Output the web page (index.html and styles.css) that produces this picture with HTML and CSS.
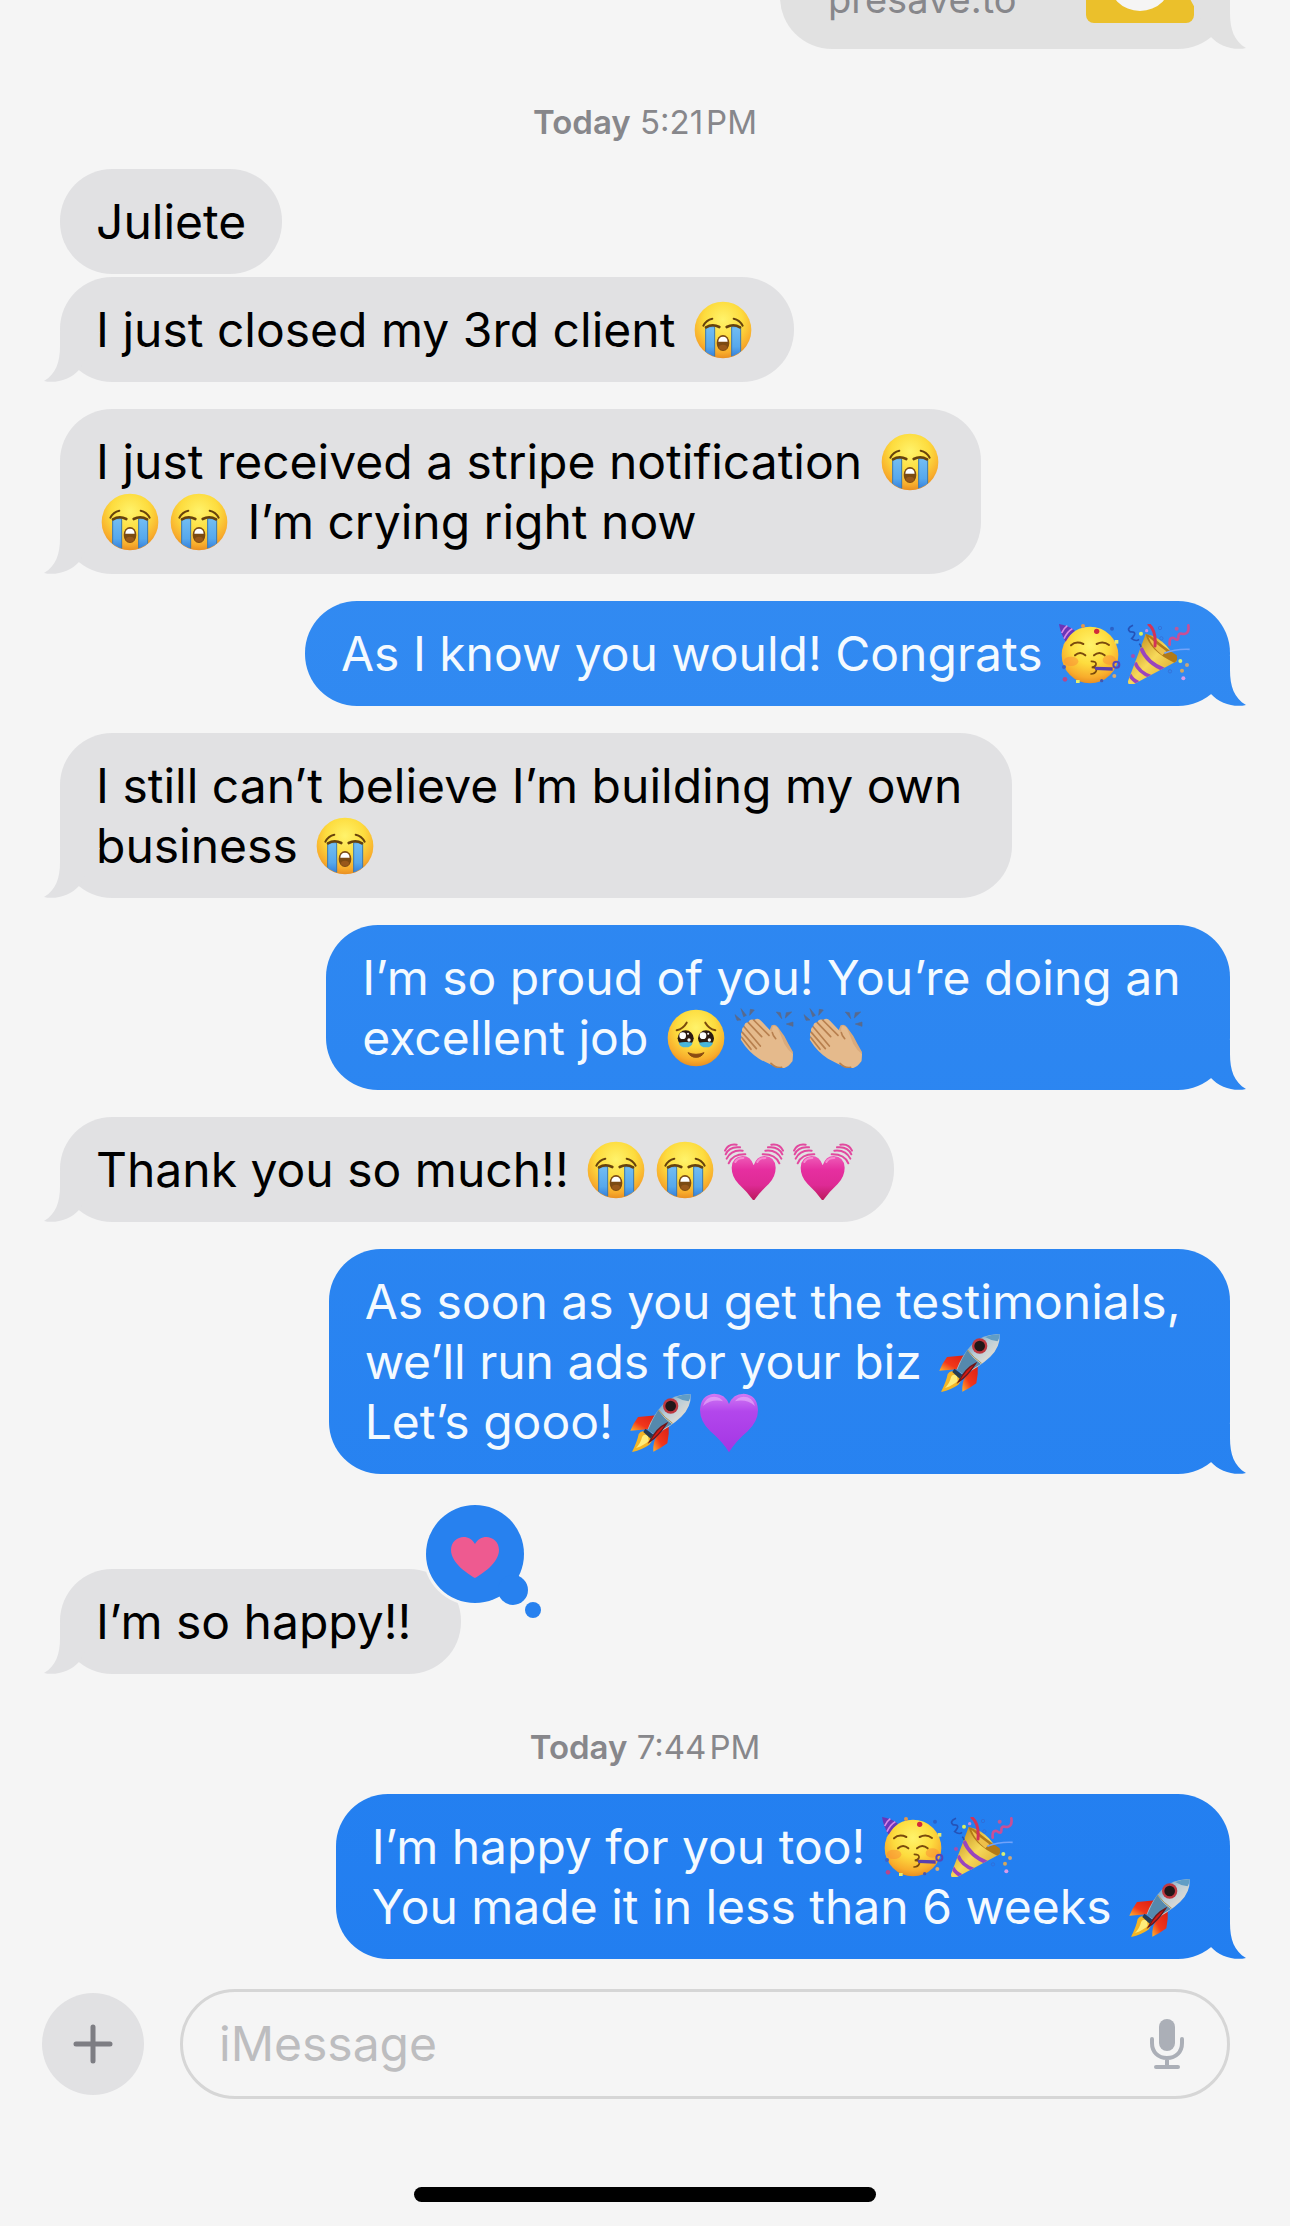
FILE: index.html
```html
<!DOCTYPE html>
<html lang="en">
<head>
    <meta charset="UTF-8">
    <meta name="viewport" content="width=device-width, initial-scale=1.0">
    <title>Messages</title>
    <link rel="stylesheet" href="styles.css">
</head>
<body>

    <!-- Emoji and icon shapes -->
    <svg class="sprite" width="0" height="0" aria-hidden="true">
        <defs>
            <radialGradient id="skin" cx="50%" cy="32%" r="68%">
                <stop offset="0" stop-color="#fff36b"/>
                <stop offset="0.5" stop-color="#fddc3e"/>
                <stop offset="0.85" stop-color="#f8ac2c"/>
                <stop offset="1" stop-color="#e98f22"/>
            </radialGradient>
            <linearGradient id="tear" x1="0" y1="0" x2="0" y2="1">
                <stop offset="0" stop-color="#72bdf3"/>
                <stop offset="0.6" stop-color="#56a8ec"/>
                <stop offset="1" stop-color="#2a72d4"/>
            </linearGradient>
            <linearGradient id="pink" x1="0" y1="0" x2="0" y2="1">
                <stop offset="0" stop-color="#ee5cb8"/>
                <stop offset="0.3" stop-color="#e62fa0"/>
                <stop offset="0.65" stop-color="#de2a95"/>
                <stop offset="1" stop-color="#b91a58"/>
            </linearGradient>
            <linearGradient id="purple" x1="0" y1="0" x2="0" y2="1">
                <stop offset="0" stop-color="#d27af4"/>
                <stop offset="0.3" stop-color="#b347ec"/>
                <stop offset="1" stop-color="#a336e4"/>
            </linearGradient>
            <linearGradient id="hull" x1="0" y1="0" x2="1" y2="1">
                <stop offset="0.1" stop-color="#3f7fae"/>
                <stop offset="0.45" stop-color="#b9cdd8"/>
                <stop offset="0.65" stop-color="#d8d8d4"/>
                <stop offset="1" stop-color="#6d6f74"/>
            </linearGradient>
            <linearGradient id="fin" x1="1" y1="0" x2="0" y2="1">
                <stop offset="0" stop-color="#d91f14"/>
                <stop offset="0.6" stop-color="#f2371b"/>
                <stop offset="1" stop-color="#ffb52c"/>
            </linearGradient>
            <linearGradient id="gold" x1="0" y1="0" x2="1" y2="1">
                <stop offset="0.1" stop-color="#c08b1c"/>
                <stop offset="0.5" stop-color="#f7d95a"/>
                <stop offset="1" stop-color="#d39a22"/>
            </linearGradient>
            <clipPath id="face-clip"><circle cx="102" cy="90" r="84"/></clipPath>
            <clipPath id="cone-clip"><path d="M9 172 Q8 184 22 183 L155 112 Q120 40 62 30 Z"/></clipPath>
        </defs>

        <symbol id="sob" viewBox="0 0 207 180">
            <circle cx="102" cy="90" r="85" fill="url(#skin)"/>
            <g clip-path="url(#face-clip)">
                <path d="M50 80 H77 V180 H50 Z M128 80 H155 V180 H128 Z" fill="url(#tear)" stroke="#3978b0" stroke-width="3"/>
            </g>
            <g fill="none" stroke="#67420c" stroke-linecap="round">
                <path d="M43 77 Q52 60 70 56 M161 77 Q152 60 134 56" stroke-width="6"/>
                <path d="M51 82 Q70 70 91 81 M153 82 Q134 70 113 81" stroke-width="8"/>
            </g>
            <ellipse cx="102" cy="129" rx="19" ry="24" fill="#7b4a12"/>
            <path d="M88 125 Q89 110 102 110 Q115 110 116 125 Z" fill="#fff"/>
            <ellipse cx="102" cy="142" rx="12" ry="8" fill="#98581a"/>
        </symbol>

        <symbol id="party-face" viewBox="0 0 207 180">
            <circle cx="102" cy="93" r="85" fill="url(#skin)"/>
            <ellipse cx="45" cy="112" rx="22" ry="14" fill="#f98b35" opacity="0.5"/>
            <ellipse cx="160" cy="108" rx="20" ry="14" fill="#f98b35" opacity="0.5"/>
            <path d="M9 0 Q36 4 57 20 Q42 30 29 53 Q14 30 9 0 Z" fill="#6a35b8"/>
            <path d="M17 27 Q24 12 34 5 M24 44 Q34 22 49 14" fill="none" stroke="#d889e6" stroke-width="5"/>
            <g fill="none" stroke="#7a4a0c" stroke-width="6" stroke-linecap="round">
                <path d="M45 64 Q60 50 82 60 M122 60 Q142 50 159 63"/>
                <path d="M57 94 Q72 80 88 94 M114 94 Q130 80 146 94"/>
                <path d="M106 112 Q122 112 120 122 Q117 130 107 130 Q123 130 121 140 Q117 150 105 150" stroke-width="5"/>
            </g>
            <path d="M116 128 L170 130 L170 140 L118 138 Z" fill="#5a40ad"/>
            <circle cx="181" cy="122" r="9" fill="none" stroke="#5846b8" stroke-width="6"/>
            <circle cx="122" cy="22" r="8" fill="#d2293b"/>
            <circle cx="81" cy="6" r="6" fill="#e3974b"/>
            <circle cx="168" cy="14" r="6" fill="#2b62c8"/>
            <rect x="176" y="48" width="11" height="11" fill="#e9e86a"/>
            <circle cx="24" cy="129" r="6" fill="#3e62c8"/>
            <circle cx="27" cy="166" r="7" fill="#b5478c"/>
            <rect x="60" y="168" width="11" height="9" fill="#e6ed6c"/>
            <circle cx="175" cy="156" r="6" fill="#d8aa72"/>
            <circle cx="137" cy="170" r="5" fill="#4555ae"/>
        </symbol>

        <symbol id="popper" viewBox="0 0 207 180">
            <path d="M9 172 Q8 184 22 183 L155 112 Q120 40 62 30 Z" fill="url(#gold)"/>
            <g clip-path="url(#cone-clip)" fill="none" stroke="#9a45bd" stroke-width="11">
                <path d="M48 72 Q66 118 120 138 M30 116 Q42 146 78 158 M14 152 Q22 168 40 176"/>
            </g>
            <path d="M62 30 Q78 34 98 52 Q130 78 155 94 Q160 112 148 116 Q112 100 88 76 Q66 52 62 30 Z" fill="#b27a18"/>
            <path d="M70 38 Q96 62 124 82 L112 94 Q82 70 70 38 Z" fill="#eec04a"/>
            <path d="M90 66 Q94 20 72 2" fill="none" stroke="#d23358" stroke-width="9" stroke-linecap="round"/>
            <path d="M134 62 Q132 38 146 42 Q162 54 160 36 Q162 26 174 30 Q194 30 190 4" fill="none" stroke="#c94f96" stroke-width="8" stroke-linecap="round"/>
            <path d="M24 4 Q2 14 16 24 Q40 22 20 44 Q34 54 42 46 M42 60 Q48 62 48 70" fill="none" stroke="#2553b8" stroke-width="5"/>
            <path d="M118 88 Q152 74 194 76" fill="none" stroke="#72a3fa" stroke-width="5"/>
            <circle cx="48" cy="29" r="6" fill="#d9ef5d"/>
            <circle cx="65" cy="20" r="5" fill="#c78ce0"/>
            <circle cx="105" cy="12" r="5" fill="none" stroke="#3568d0" stroke-width="2"/>
            <circle cx="109" cy="43" r="5" fill="none" stroke="#3568d0" stroke-width="2"/>
            <circle cx="155" cy="14" r="6" fill="#b95b9d"/>
            <circle cx="24" cy="96" r="6" fill="#a44fae"/>
            <circle cx="166" cy="111" r="6" fill="#d7ef76"/>
            <circle cx="186" cy="123" r="6" fill="#c9a77b"/>
            <circle cx="171" cy="140" r="6" fill="#d4a75b"/>
            <circle cx="135" cy="142" r="5" fill="none" stroke="#3568d0" stroke-width="2"/>
            <circle cx="175" cy="163" r="6" fill="#d99be8"/>
        </symbol>

        <symbol id="pleading" viewBox="0 0 207 180">
            <circle cx="102" cy="90" r="85" fill="url(#skin)"/>
            <g fill="none" stroke="#7a4a0c" stroke-width="6" stroke-linecap="round">
                <path d="M44 67 Q64 62 74 44 M160 67 Q140 62 130 44"/>
            </g>
            <circle cx="71" cy="91" r="24" fill="#2b1a12"/>
            <circle cx="132" cy="91" r="24" fill="#2b1a12"/>
            <path d="M50 104 Q71 100 92 104 Q88 118 71 118 Q54 118 50 104 Z M111 104 Q132 100 153 104 Q149 118 132 118 Q115 118 111 104 Z" fill="#49b6da"/>
            <g fill="#fff">
                <circle cx="62" cy="83" r="10"/><circle cx="123" cy="83" r="10"/>
                <circle cx="81" cy="96" r="5"/><circle cx="142" cy="96" r="5"/>
                <circle cx="78" cy="77" r="3"/><circle cx="139" cy="77" r="3"/>
            </g>
            <path d="M78 134 Q102 144 126 134 Q118 148 102 148 Q86 148 78 134 Z" fill="#8a4b12" stroke="#8a4b12" stroke-width="3" stroke-linejoin="round"/>
        </symbol>

        <symbol id="clap" viewBox="0 0 207 180">
            <path d="M12 20 L30 36 L18 37 Z M30 2 L46 22 L38 26 Z M58 4 L70 6 L56 22 Z M136 12 L148 14 L152 32 Z M166 14 L182 12 L163 30 Z M166 48 L186 42 V55 Z" fill="#596a8c" stroke="#596a8c" stroke-width="2" stroke-linejoin="round"/>
            <path d="M112 76 L122 52 Q134 46 141 58 L160 84 Q172 108 186 132 L184 160 Q158 188 124 172 Z" fill="#d9aa7c"/>
            <path d="M30 96 Q28 90 33 88 Q26 76 34 72 Q30 58 40 56 Q40 42 52 44 Q56 30 70 36 Q80 28 90 38 L124 74 Q122 56 128 54 Q138 54 142 64 L160 108 Q170 126 186 138 L184 160 Q166 186 144 180 Q112 168 84 152 Q52 132 30 96 Z" fill="#e5ba8c"/>
            <path d="M52 44 L92 86 M68 36 L114 82 M40 57 L88 114 M34 73 L76 122 M124 74 Q126 84 134 92 M33 89 L60 124 M120 166 Q136 182 152 178" fill="none" stroke="#b8804f" stroke-width="5" stroke-linecap="round"/>
        </symbol>

        <symbol id="beating" viewBox="0 0 207 180">
            <path d="M101 183 Q84 158 56 132 Q35 110 35 83 Q36 50 68 48 Q92 48 101 76 Q110 48 134 48 Q166 50 167 83 Q167 110 146 132 Q118 158 101 183 Z" fill="url(#pink)"/>
            <path d="M46 66 Q52 54 70 54 M112 66 Q118 54 136 54" fill="none" stroke="#f68bd0" stroke-width="6" stroke-linecap="round"/>
            <g fill="none" stroke="#e2499f" stroke-width="6" stroke-linecap="round">
                <path d="M26 70 Q38 42 76 43 M20 56 Q34 28 68 32 M17 43 Q28 18 60 22 M15 32 Q24 10 50 14"/>
                <path d="M178 70 Q166 42 128 43 M184 56 Q170 28 136 32 M187 43 Q176 18 144 22 M189 32 Q180 10 154 14"/>
            </g>
        </symbol>

        <symbol id="rocket" viewBox="0 0 207 180">
            <path d="M92 70 L36 75 Q22 94 13 116 L66 112 Z" fill="url(#fin)"/>
            <path d="M74 128 Q48 108 38 126 Q34 148 18 180 Q50 172 70 158 Q84 144 74 128 Z" fill="#f4b526"/>
            <path d="M66 130 Q50 124 48 136 Q44 154 30 168 Q58 158 68 146 Z" fill="#ffec7a"/>
            <path d="M128 98 L92 134 Q80 150 82 179 Q106 168 124 154 Q130 124 128 98 Z" fill="url(#fin)"/>
            <path d="M194 7 Q146 4 110 38 Q80 70 65 112 L84 128 Q130 108 166 74 Q196 46 194 7 Z" fill="url(#hull)"/>
            <path d="M97 54 Q80 80 66 114 L84 127 Q112 112 138 96 Q112 78 97 54 Z" fill="#5589ad"/>
            <path d="M98 54 Q116 78 140 94" fill="none" stroke="#ad9659" stroke-width="3"/>
            <path d="M150 15 Q168 26 188 28 Q194 18 194 7 Q172 6 150 15 Z" fill="#619dc5"/>
            <circle cx="134" cy="42" r="23" fill="#bd3840"/>
            <circle cx="134" cy="42" r="16" fill="#211718"/>
            <path d="M122 94 Q92 108 70 150 Q98 132 122 94 Z" fill="#d41a14" stroke="#6c171a" stroke-width="4"/>
            <path d="M58 110 L82 128 L74 140 L52 120 Z" fill="#263c53"/>
        </symbol>

        <symbol id="purple-heart" viewBox="0 0 207 180">
            <path d="M102 181 Q82 148 46 118 Q15 88 15 54 Q17 8 58 5 Q90 5 102 36 Q114 5 146 5 Q187 8 189 54 Q189 88 158 118 Q122 148 102 181 Z" fill="url(#purple)"/>
            <path d="M24 42 Q32 14 58 14 Q78 16 84 28 Q50 20 24 42 Z M120 28 Q126 16 146 14 Q172 14 180 42 Q154 20 120 28 Z" fill="#e6aafa" opacity="0.7"/>
        </symbol>
    </svg>

    <main class="chat">
        <div class="message sent link-card">
            <a href="#">presave.to</a>
            <svg class="link-thumb" viewBox="0 0 108 108" aria-hidden="true">
                <rect width="108" height="108" rx="8" fill="#ebc02b"/>
                <circle cx="54" cy="64" r="32" fill="#f5f5f5"/>
                <circle cx="54" cy="72" r="12" fill="#dedede"/>
            </svg>
        </div>

        <p class="timestamp"><b>Today</b> 5:21&#8202;PM</p>

        <div class="message received no-tail">Juliete</div>
        <div class="message received">I just closed my 3rd client <svg class="emoji" role="img" aria-label="crying"><use href="#sob"/></svg></div>
        <div class="message received">I just received a stripe notification <svg class="emoji" role="img" aria-label="crying"><use href="#sob"/></svg><br><svg class="emoji" role="img" aria-label="crying"><use href="#sob"/></svg><svg class="emoji" role="img" aria-label="crying"><use href="#sob"/></svg> I’m crying right now</div>
        <div class="message sent">As I know you would! Congrats <svg class="emoji" role="img" aria-label="party face"><use href="#party-face"/></svg><svg class="emoji" role="img" aria-label="party popper"><use href="#popper"/></svg></div>
        <div class="message received">I still can’t believe I’m building my own&nbsp;<br>business <svg class="emoji" role="img" aria-label="crying"><use href="#sob"/></svg></div>
        <div class="message sent">I’m so proud of you! You’re doing an&nbsp;<br>excellent job <svg class="emoji" role="img" aria-label="holding back tears"><use href="#pleading"/></svg><svg class="emoji" role="img" aria-label="clap"><use href="#clap"/></svg><svg class="emoji" role="img" aria-label="clap"><use href="#clap"/></svg></div>
        <div class="message received">Thank you so much!! <svg class="emoji" role="img" aria-label="crying"><use href="#sob"/></svg><svg class="emoji" role="img" aria-label="crying"><use href="#sob"/></svg><svg class="emoji" role="img" aria-label="beating heart"><use href="#beating"/></svg><svg class="emoji" role="img" aria-label="beating heart"><use href="#beating"/></svg></div>
        <div class="message sent">As soon as you get the testimonials,&nbsp;<br>we’ll run ads for your biz <svg class="emoji" role="img" aria-label="rocket"><use href="#rocket"/></svg><br>Let’s gooo! <svg class="emoji" role="img" aria-label="rocket"><use href="#rocket"/></svg><svg class="emoji" role="img" aria-label="purple heart"><use href="#purple-heart"/></svg></div>
        <div class="message received has-reaction">I’m so happy!!&nbsp;
            <svg class="reaction" viewBox="0 0 120 120" role="img" aria-label="loved">
                <circle cx="52" cy="52" r="52" fill="#f5f5f5"/>
                <g fill="#2781ef">
                    <circle cx="52" cy="52" r="49"/>
                    <circle cx="90" cy="88" r="15"/>
                    <circle cx="110" cy="108" r="8"/>
                </g>
                <path d="M52 76 C45 72 28 61 28 48 C28 34 46 30 52 42 C58 30 76 34 76 48 C76 61 59 72 52 76 Z" fill="#ee5a90"/>
            </svg>
        </div>

        <p class="timestamp"><b>Today</b> 7:44&#8202;PM</p>

        <div class="message sent">I’m happy for you too! <svg class="emoji" role="img" aria-label="party face"><use href="#party-face"/></svg><svg class="emoji" role="img" aria-label="party popper"><use href="#popper"/></svg><br>You made it in less than 6 weeks <svg class="emoji" role="img" aria-label="rocket"><use href="#rocket"/></svg></div>
    </main>

    <form class="composer">
        <button type="button" class="add-btn" aria-label="Add">
            <svg width="40" height="40" viewBox="0 0 40 40" fill="none" stroke="#7d7d83" stroke-width="5" stroke-linecap="round">
                <path d="M20 3 V37 M3 20 H37"/>
            </svg>
        </button>
        <div class="field">
            <input type="text" placeholder="iMessage" aria-label="iMessage">
            <button type="button" class="mic-btn" aria-label="Dictate">
                <svg width="36" height="50" viewBox="0 0 36 50" fill="none" stroke="#abafb7" stroke-width="4" stroke-linecap="round">
                    <rect x="10" y="0" width="16" height="32" rx="8" fill="#abafb7" stroke="none"/>
                    <path d="M3 20 V24 C3 33 9 39 18 39 C27 39 33 33 33 24 V20 M18 39 V48 M7 48 H29"/>
                </svg>
            </button>
        </div>
    </form>

    <div class="home-bar"></div>

</body>
</html>
```
FILE: styles.css
```css
* {
    box-sizing: border-box;
}

body {
    margin: 0;
    height: 100vh;
    display: flex;
    flex-direction: column;
    background: #f5f5f5;
    color: #000;
    font-family: Inter, "Liberation Sans", sans-serif;
    font-size: 48px;
    line-height: 60px;
}

.sprite {
    position: absolute;
}

/* Conversation, newest message kept at the bottom */
.chat {
    flex: 1;
    min-height: 0;
    display: flex;
    flex-direction: column;
    justify-content: flex-end;
    align-items: flex-start;
    padding: 0 60px;
    overflow: hidden;
}

.message {
    position: relative;
    flex-shrink: 0;
    padding: 23px 36px 22px;
    margin-top: 27px;
    border-radius: 52px;
}

.received {
    background: #e1e1e3;
}

.sent {
    align-self: flex-end;
    color: #f4faff;
    background: linear-gradient(#388ff2, #1f7cf0) fixed;
}

.no-tail + .message {
    margin-top: 3px;
}

/* Bubble tails */
.message::after {
    content: "";
    position: absolute;
    bottom: 0;
    width: 56px;
    height: 50px;
    background: inherit;
}

.received::after {
    left: -16px;
    clip-path: path("M16 0 V14 C16 30 12 42 0 49 C12 52 27 47 35 38 L56 0 Z");
}

.sent::after {
    right: -16px;
    clip-path: path("M40 0 V14 C40 30 44 42 56 49 C44 52 29 47 21 38 L0 0 Z");
}

.no-tail::after {
    display: none;
}

.emoji {
    width: 69px;
    height: 60px;
    vertical-align: top;
    overflow: visible;
}

.link-card {
    display: flex;
    justify-content: space-between;
    align-items: flex-end;
    width: 450px;
    padding: 26px 36px 26px 48px;
    background: #e1e1e1;
}

.link-card a {
    color: #87878b;
    font-size: 38px;
    line-height: 48px;
    text-decoration: none;
}

.link-thumb {
    width: 108px;
    height: 108px;
}

.timestamp {
    flex-shrink: 0;
    align-self: center;
    margin: 54px 0 1px;
    color: #87878b;
    font-size: 33px;
    line-height: 38px;
}

.timestamp b {
    font-weight: 600;
}

.has-reaction {
    margin-top: 95px;
}

.reaction {
    position: absolute;
    z-index: 1;
    top: -67px;
    right: -82px;
    width: 120px;
    height: 120px;
}

/* Bottom bar */
.composer {
    display: flex;
    align-items: center;
    gap: 36px;
    padding: 30px 60px 0 42px;
}

button {
    padding: 0;
    border: none;
    background: none;
    cursor: pointer;
}

button svg {
    display: block;
}

.add-btn {
    display: flex;
    justify-content: center;
    align-items: center;
    width: 102px;
    height: 102px;
    border-radius: 50%;
    background: #e1e1e3;
}

.field {
    flex: 1;
    display: flex;
    align-items: center;
    height: 110px;
    padding: 0 42px 0 36px;
    border: 3px solid #d6d6d6;
    border-radius: 55px;
}

.field input {
    flex: 1;
    min-width: 0;
    padding: 0;
    border: none;
    outline: none;
    background: none;
    font: inherit;
}

.field input::placeholder {
    color: #bdbdbf;
    opacity: 1;
}

.home-bar {
    width: 462px;
    height: 15px;
    margin: 88px auto 24px;
    border-radius: 8px;
    background: #000;
}
```
